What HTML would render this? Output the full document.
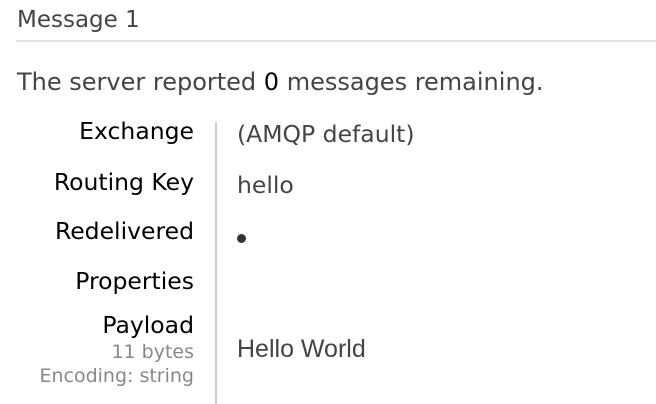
<!DOCTYPE html>
<html><head><style>
body{margin:0;width:656px;height:404px;background:#fff;font-family:"DejaVu Sans","Liberation Sans",sans-serif;color:#444;position:relative;overflow:hidden}
div{position:absolute;white-space:nowrap;line-height:1}
.l{right:462px;color:#000;font-size:23.5px;text-align:right}
.v{left:237px;font-size:23.5px;color:#444}
.s{right:462px;color:#888;font-size:19px;text-align:right}
</style></head><body>
<div style="left:17px;top:9px;font-size:23px;color:#444">Message 1</div>
<div style="left:16px;top:40px;width:640px;height:2px;background:#e2e2e2"></div>
<div style="left:17px;top:70px;font-size:24px;color:#444">The server reported <span style="color:#000">0</span> messages remaining.</div>
<div style="left:215px;top:122px;width:2px;height:282px;background:#ccc"></div>
<div class="l" style="top:120px">Exchange</div>
<div class="v" style="top:123px">(AMQP default)</div>
<div class="l" style="top:171px">Routing Key</div>
<div class="v" style="top:174px">hello</div>
<div class="l" style="top:220px">Redelivered</div>
<div style="left:237px;top:234px;width:9px;height:9px;border-radius:50%;background:#333"></div>
<div class="l" style="top:270px">Properties</div>
<div class="l" style="top:314px">Payload</div>
<div class="s" style="top:343px">11 bytes</div>
<div class="s" style="top:367px">Encoding: string</div>
<div class="v" style="top:337px;font-family:'Liberation Sans',sans-serif;font-size:25px">Hello World</div>
</body></html>
